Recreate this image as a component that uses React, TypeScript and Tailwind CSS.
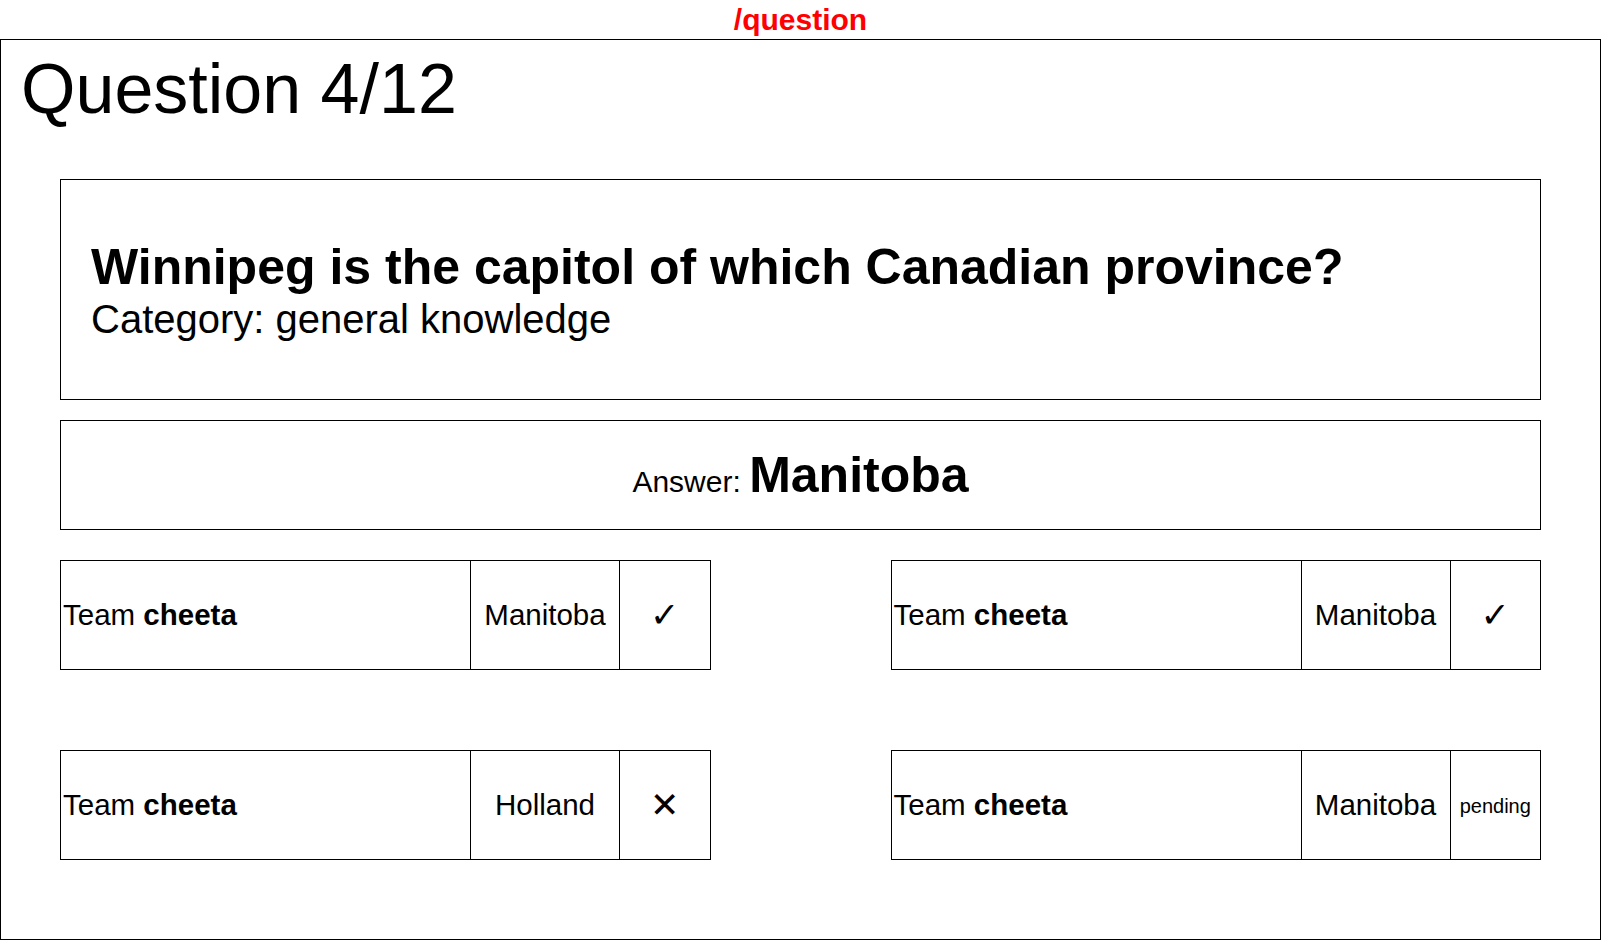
type Status = "correct" | "wrong" | "pending";

const submissions: { team: string; answer: string; status: Status }[] = [
  { team: "cheeta", answer: "Manitoba", status: "correct" },
  { team: "cheeta", answer: "Manitoba", status: "correct" },
  { team: "cheeta", answer: "Holland", status: "wrong" },
  { team: "cheeta", answer: "Manitoba", status: "pending" },
];

function StatusCell({ status }: { status: Status }) {
  if (status === "pending") {
    return <span className="text-[20px]">pending</span>;
  }
  return (
    <span className="text-[35px]" style={{ fontFamily: "'DejaVu Sans', sans-serif" }}>
      {status === "correct" ? "✓" : "✕"}
    </span>
  );
}

function TeamRow({ team, answer, status }: { team: string; answer: string; status: Status }) {
  return (
    <div className="flex h-[110px] border border-black">
      <div className="flex w-[409px] items-center pt-[2px] pl-[2px] text-[29.5px]">
        Team&nbsp;<b>{team}</b>
      </div>
      <div className="flex w-[149px] items-center justify-center border-l border-black pt-[2px] text-[29.5px]">
        {answer}
      </div>
      <div className="flex flex-1 items-center justify-center border-l border-black pt-[2px]">
        <StatusCell status={status} />
      </div>
    </div>
  );
}

export default function App() {
  return (
    <div
      className="flex h-[940px] flex-col bg-white text-black"
      style={{ fontFamily: "'Liberation Sans', Arial, sans-serif" }}
    >
      {/* ── Route label ── */}
      <div className="flex h-[39px] shrink-0 items-center justify-center text-[30px] font-bold leading-[39px] text-[#ff0000]">
        /question
      </div>

      {/* ── Screen ── */}
      <div className="flex-1 border border-black">
        <h1 className="pl-[20px] pt-[9px] text-[70px] leading-[1.15]">Question 4/12</h1>

        <div className="mt-[49px] flex flex-col gap-[20px] px-[59px]">
          <div className="flex h-[221px] flex-col justify-center border border-black px-[30px] pt-[3px] leading-[1.15]">
            <h2 className="text-[50px] font-bold">Winnipeg is the capitol of which Canadian province?</h2>
            <p className="text-[40px]">Category: general knowledge</p>
          </div>

          <div className="flex h-[110px] items-center justify-center border border-black pt-[3px]">
            <p className="leading-[1.15]">
              <span className="text-[30px]">Answer: </span>
              <span className="text-[50px] font-bold">Manitoba</span>
            </p>
          </div>

          <div className="mt-[10px] grid grid-cols-2 gap-x-[180px] gap-y-[80px]">
            {submissions.map((s, i) => (
              <TeamRow key={i} {...s} />
            ))}
          </div>
        </div>
      </div>
    </div>
  );
}
